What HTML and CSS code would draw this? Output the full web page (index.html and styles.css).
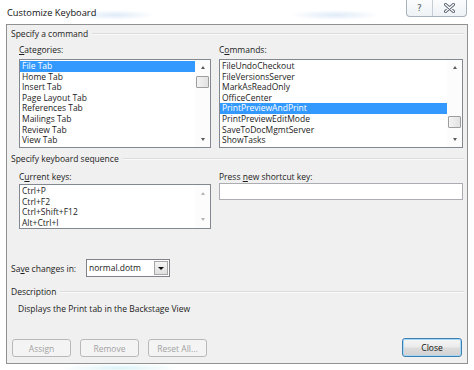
FILE: index.html
```html
<!DOCTYPE html>
<html>
<head>
<meta charset="utf-8">
<link rel="stylesheet" href="styles.css">
</head>
<body>
<div class="window">
  <div class="titlebar">
    <span class="title">Customize Keyboard</span>
    <div class="caption">
      <span class="cb help">?</span>
      <span class="cb close">
        <svg width="11" height="10" viewBox="0 0 11 10"><path d="M1.5 1.5 L9.5 8.5 M9.5 1.5 L1.5 8.5" stroke="#5a6470" stroke-width="3" stroke-linecap="round"/><path d="M1.5 1.5 L9.5 8.5 M9.5 1.5 L1.5 8.5" stroke="#ffffff" stroke-width="1.2" stroke-linecap="round"/></svg>
      </span>
    </div>
  </div>
  <div class="panel">
    <div class="group-title g1">Specify a command</div>
    <div class="cols">
      <div class="col">
        <div class="label"><u>C</u>ategories:</div>
        <div class="listbox big">
          <div class="items">
            <div class="row sel">File Tab</div>
            <div class="row">Home Tab</div>
            <div class="row">Insert Tab</div>
            <div class="row">Page Layout Tab</div>
            <div class="row">References Tab</div>
            <div class="row">Mailings Tab</div>
            <div class="row">Review Tab</div>
            <div class="row">View Tab</div>
          </div>
          <div class="sbar">
            <div class="arrow up"></div>
            <div class="track"><div class="thumb t1"></div></div>
            <div class="arrow down"></div>
          </div>
        </div>
      </div>
      <div class="col">
        <div class="label">C<u>o</u>mmands:</div>
        <div class="listbox big">
          <div class="items">
            <div class="row">FileUndoCheckout</div>
            <div class="row">FileVersionsServer</div>
            <div class="row">MarkAsReadOnly</div>
            <div class="row">OfficeCenter</div>
            <div class="row sel">PrintPreviewAndPrint</div>
            <div class="row">PrintPreviewEditMode</div>
            <div class="row">SaveToDocMgmtServer</div>
            <div class="row">ShowTasks</div>
          </div>
          <div class="sbar">
            <div class="arrow up"></div>
            <div class="track"><div class="thumb t2"></div></div>
            <div class="arrow down"></div>
          </div>
        </div>
      </div>
    </div>
    <div class="group-title g2">Specify keyboard sequence</div>
    <div class="cols">
      <div class="col">
        <div class="label l2">C<u>u</u>rrent keys:</div>
        <div class="listbox small">
          <div class="items">
            <div class="row">Ctrl+P</div>
            <div class="row">Ctrl+F2</div>
            <div class="row">Ctrl+Shift+F12</div>
            <div class="row">Alt+Ctrl+I</div>
          </div>
          <div class="sbar dis">
            <div class="arrow up"></div>
            <div class="track"></div>
            <div class="arrow down"></div>
          </div>
        </div>
      </div>
      <div class="col">
        <div class="label l2">Press <u>n</u>ew shortcut key:</div>
        <div class="input"></div>
      </div>
    </div>
    <div class="save-row">
      <span class="save-label">Sa<u>v</u>e changes in:</span>
      <div class="select">
        <span class="select-value">normal.dotm</span>
        <span class="select-btn"><span class="tri"></span></span>
      </div>
    </div>
    <div class="group-title g3">Description</div>
    <div class="desc">Displays the Print tab in the Backstage View</div>
    <div class="buttons">
      <div class="btn dis">Assign</div>
      <div class="btn dis">Remove</div>
      <div class="btn dis">Reset All...</div>
      <div class="spacer"></div>
      <div class="btn default">Close</div>
    </div>
  </div>
</div>
</body>
</html>
```

FILE: styles.css
```css
* { box-sizing: border-box; }
html, body { margin: 0; padding: 0; }
body {
  width: 474px;
  height: 370px;
  overflow: hidden;
  background: #ffffff;
  font-family: "Open Sans", "Noto Sans", sans-serif;
  font-size: 8.5px;
  color: #1c1c1c;
}
.window {
  height: 370px;
  background:
    radial-gradient(ellipse 40px 5px at 115px 15px, rgba(130,175,225,0.25), rgba(255,255,255,0) 100%),
    radial-gradient(ellipse 45px 5px at 335px 15px, rgba(130,175,225,0.25), rgba(255,255,255,0) 100%),
    radial-gradient(ellipse 60px 4px at 120px 368px, rgba(150,220,235,0.35), rgba(255,255,255,0) 100%),
    #ffffff;
}
.titlebar {
  height: 24px;
  display: flex;
  justify-content: space-between;
  align-items: flex-start;
  padding: 0 7px 0 7px;
}
.title {
  font-size: 9.3px;
  line-height: 14px;
  margin-top: 6px;
  color: #111;
}
.caption {
  display: flex;
  height: 17px;
  border: 1px solid #a8b2bd;
  border-top: none;
  border-radius: 0 0 4px 4px;
  background: linear-gradient(#fbfcfd, #eef2f5);
}
.cb {
  display: flex;
  align-items: center;
  justify-content: center;
}
.help {
  width: 26px;
  font-family: "DejaVu Sans", sans-serif;
  font-size: 9px;
  color: #4c5661;
  border-right: 1px solid #c6cdd5;
}
.close { width: 33px; }

.panel {
  margin-left: 6px;
  width: 462px;
  height: 340px;
  border: 1px solid #8f9193;
  background: #f0f0f0;
  padding: 3px 3px 5px 4px;
  display: flex;
  flex-direction: column;
}
.group-title {
  display: flex;
  align-items: center;
  line-height: 12px;
  height: 12px;
}
.group-title::after {
  content: "";
  flex: 1;
  height: 1px;
  margin-left: 4px;
  background: #dcdcdc;
  border-bottom: 1px solid #fafafa;
}
.g2 { margin-top: 5px; }
.g3 { margin-top: 9px; }
.cols {
  display: grid;
  grid-template-columns: 192px 244px;
  column-gap: 8px;
  padding-left: 8px;
}
.label {
  line-height: 12px;
  margin-top: 4px;
  margin-bottom: 3px;
}
.label.l2 { margin-top: 6px; margin-bottom: 1px; }
u { text-decoration-thickness: 1px; text-underline-offset: 1px; }
.listbox {
  display: flex;
  border: 1px solid #828790;
  background: #fff;
}
.listbox.big { height: 89px; }
.listbox.small { height: 45px; }
.items {
  flex: 1;
  padding-top: 1px;
  min-width: 0;
}
.row {
  line-height: 10.6px;
  height: 10.6px;
  padding-left: 2px;
  white-space: nowrap;
}
.row.sel { background: #3399ff; color: #fff; }
.sbar {
  width: 15px;
  display: flex;
  flex-direction: column;
  background: #fcfcfc;
}
.arrow {
  height: 15px;
  display: flex;
  align-items: center;
  justify-content: center;
}
.arrow::before {
  content: "";
  width: 0;
  height: 0;
  border-left: 2.5px solid transparent;
  border-right: 2.5px solid transparent;
}
.arrow.up::before { border-bottom: 3px solid #5a5a5a; }
.arrow.down::before { border-top: 3px solid #5a5a5a; }
.sbar.dis .arrow.up::before { border-bottom-color: #b4b4b4; }
.sbar.dis .arrow.down::before { border-top-color: #b4b4b4; }
.small .arrow { height: 17px; }
.track {
  flex: 1;
  display: flex;
  flex-direction: column;
  padding: 0 1px;
}
.thumb {
  height: 12px;
  border: 1px solid #9e9e9e;
  border-radius: 1px;
  background: linear-gradient(90deg, #f3f3f3, #e2e2e2);
}
.thumb.t1 { margin-top: 1px; }
.thumb.t2 { margin-top: 41px; }
.input {
  height: 17px;
  margin-top: -1px;
  border: 1px solid #abadb3;
  background: #fff;
}
.save-row {
  display: flex;
  align-items: center;
  margin-top: 30px;
  height: 18px;
}
.save-label { width: 75px; }
.select {
  width: 84px;
  height: 18px;
  display: flex;
  border: 1px solid #7f8388;
  background: #fff;
}
.select-value {
  flex: 1;
  padding-left: 2px;
  line-height: 16px;
}
.select-btn {
  width: 14px;
  margin: 1px;
  border: 1px solid #a6a6a6;
  background: linear-gradient(#f4f4f4, #e0e0e0);
  display: flex;
  align-items: center;
  justify-content: center;
}
.tri {
  width: 0;
  height: 0;
  border-left: 3px solid transparent;
  border-right: 3px solid transparent;
  border-top: 3px solid #111;
}
.desc {
  margin-top: 5px;
  line-height: 12px;
  padding-left: 7px;
}
.buttons {
  display: flex;
  margin-top: 24px;
  padding-left: 1px;
  padding-right: 2px;
  gap: 9px;
}
.spacer { flex: 1; }
.btn {
  width: 59px;
  height: 18px;
  display: flex;
  align-items: center;
  justify-content: center;
  border: 1px solid #b9b9b9;
  border-radius: 3px;
  background: #f4f4f4;
  color: #a3a3a3;
}
.btn.default {
  width: 60px;
  height: 19px;
  margin-top: -1px;
  color: #111;
  border: 1px solid #3c7fb1;
  background: linear-gradient(#f6f6f6 0%, #ebebeb 48%, #dcdcdc 52%, #d2d2d2 100%);
  box-shadow: inset 0 0 0 1px #a9d6f3;
}
```
